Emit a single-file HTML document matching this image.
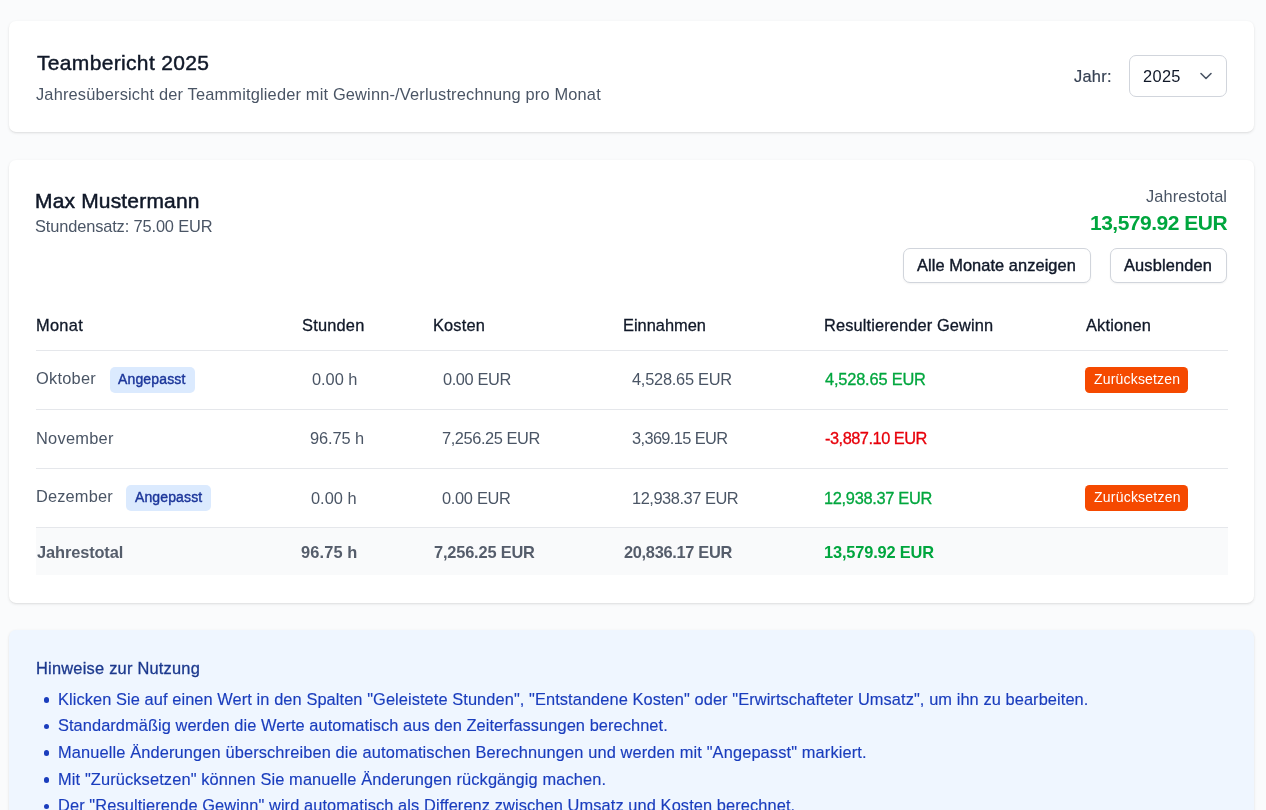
<!DOCTYPE html>
<html lang="de">
<head>
<meta charset="utf-8">
<title>Teambericht 2025</title>
<style>
*{box-sizing:border-box;margin:0;padding:0}
html,body{width:1266px;height:810px;overflow:hidden}
body{background:#fafbfc;font-family:"Liberation Sans",sans-serif;color:#101828;position:relative}
.card{position:absolute;left:9px;width:1245px;background:#fff;border-radius:7px;box-shadow:0 1px 3px rgba(0,0,0,.10),0 1px 2px -1px rgba(0,0,0,.10)}
.box{position:absolute}
.tx{position:absolute;white-space:nowrap;line-height:1;will-change:transform}

.sel{border:1px solid #d1d5dc;border-radius:7px;background:#fff}
.btn{border:1px solid #d1d5dc;border-radius:7px;background:#fff;box-shadow:0 1px 2px rgba(0,0,0,.05)}
.line{height:1px;background:#e5e7eb;left:36px;width:1192px}
.badge{background:#dbeafe;border-radius:5px}
.reset{background:#f54900;border-radius:4.5px}
.dot{width:5.5px;height:5.5px;border-radius:50%;background:#1a3dbd;left:43.8px}

</style>
</head>
<body>
<div class="card" style="top:21px;height:111px"></div>
<div class="card" style="top:160px;height:443px"></div>
<div class="card" style="top:630px;height:230px;background:#eff6ff"></div>
<div class="box sel" style="left:1129px;top:55px;width:98px;height:42px"></div>
<svg class="box" style="left:1199px;top:71px" width="14" height="10" viewBox="0 0 14 10"><path d="M2 2.5 L7 7.5 L12 2.5" fill="none" stroke="#4a5565" stroke-width="1.6" stroke-linecap="round" stroke-linejoin="round"/></svg>
<div class="box btn" style="left:903px;top:248px;width:188px;height:35px"></div>
<div class="box btn" style="left:1110px;top:248px;width:117px;height:35px"></div>
<div class="box line" style="top:350px"></div>
<div class="box line" style="top:409px"></div>
<div class="box line" style="top:468px"></div>
<div class="box line" style="top:527px"></div>
<div class="box" style="left:36px;top:528px;width:1192px;height:47px;background:#f9fafb"></div>
<div class="box badge" style="left:109.5px;top:367px;width:85.5px;height:26px"></div>
<div class="box badge" style="left:125.5px;top:485px;width:85.5px;height:26px"></div>
<div class="box reset" style="left:1085px;top:366.5px;width:103px;height:26.5px"></div>
<div class="box reset" style="left:1085px;top:484.5px;width:103px;height:26.5px"></div>
<div class="box dot" style="top:697.0px"></div>
<div class="box dot" style="top:723.8px"></div>
<div class="box dot" style="top:750.3px"></div>
<div class="box dot" style="top:777.1px"></div>
<div class="box dot" style="top:803.7px"></div>

<span id="t1" class="tx" style="top:52.00px;font-size:21px;color:#101828;left:36.50px;-webkit-text-stroke:0.45px #101828;letter-spacing:0.333px;">Teambericht 2025</span>
<span id="sub1" class="tx" style="top:85.51px;font-size:16.4px;color:#4a5565;left:36.00px;letter-spacing:0.169px;">Jahresübersicht der Teammitglieder mit Gewinn-/Verlustrechnung pro Monat</span>
<span id="jahr" class="tx" style="top:67.70px;font-size:16.4px;color:#364153;left:1073.50px;-webkit-text-stroke:0.2px #364153;letter-spacing:0.250px;">Jahr:</span>
<span id="y2025" class="tx" style="top:67.70px;font-size:16.4px;color:#101828;left:1143.00px;letter-spacing:0.333px;">2025</span>
<span id="name" class="tx" style="top:189.61px;font-size:21px;color:#101828;left:35.40px;-webkit-text-stroke:0.5px #101828;letter-spacing:0.169px;">Max Mustermann</span>
<span id="rate" class="tx" style="top:218.11px;font-size:16.4px;color:#4a5565;left:35.40px;letter-spacing:-0.133px;">Stundensatz: 75.00 EUR</span>
<span id="jt" class="tx" style="top:188.11px;font-size:16.4px;color:#4a5565;right:39.00px;letter-spacing:0.080px;">Jahrestotal</span>
<span id="big" class="tx" style="top:211.90px;font-size:21px;color:#00a63e;right:39.00px;font-weight:700;letter-spacing:-0.500px;">13,579.92 EUR</span>
<span id="b1" class="tx" style="top:256.90px;font-size:16.4px;color:#101828;left:917.40px;-webkit-text-stroke:0.4px #101828;letter-spacing:0.063px;">Alle Monate anzeigen</span>
<span id="b2" class="tx" style="top:256.90px;font-size:16.4px;color:#101828;left:1124.30px;-webkit-text-stroke:0.4px #101828;letter-spacing:0.156px;">Ausblenden</span>
<span id="h1" class="tx" style="top:316.82px;font-size:16.4px;color:#101828;left:35.60px;-webkit-text-stroke:0.3px #101828;letter-spacing:0.300px;">Monat</span>
<span id="h2" class="tx" style="top:316.82px;font-size:16.4px;color:#101828;left:302.10px;-webkit-text-stroke:0.3px #101828;letter-spacing:0.200px;">Stunden</span>
<span id="h3" class="tx" style="top:316.82px;font-size:16.4px;color:#101828;left:433.20px;-webkit-text-stroke:0.3px #101828;letter-spacing:0.160px;">Kosten</span>
<span id="h4" class="tx" style="top:316.82px;font-size:16.4px;color:#101828;left:623.20px;-webkit-text-stroke:0.3px #101828;">Einnahmen</span>
<span id="h5" class="tx" style="top:316.82px;font-size:16.4px;color:#101828;left:824.00px;-webkit-text-stroke:0.3px #101828;letter-spacing:0.120px;">Resultierender Gewinn</span>
<span id="h6" class="tx" style="top:316.82px;font-size:16.4px;color:#101828;left:1085.50px;-webkit-text-stroke:0.3px #101828;letter-spacing:0.171px;">Aktionen</span>
<span id="r1m" class="tx" style="top:370.01px;font-size:16.4px;color:#4a5565;left:35.60px;letter-spacing:0.233px;">Oktober</span>
<span id="r1a" class="tx" style="top:372.01px;font-size:14px;color:#1c369a;left:118.40px;-webkit-text-stroke:0.4px #1c369a;letter-spacing:0.150px;">Angepasst</span>
<span id="r1s" class="tx" style="top:371.40px;font-size:16.4px;color:#4a5565;left:311.70px;letter-spacing:-0.040px;">0.00 h</span>
<span id="r1k" class="tx" style="top:371.40px;font-size:16.4px;color:#4a5565;left:443.10px;letter-spacing:-0.400px;">0.00 EUR</span>
<span id="r1e" class="tx" style="top:371.40px;font-size:16.4px;color:#4a5565;left:632.30px;letter-spacing:-0.255px;">4,528.65 EUR</span>
<span id="r1g" class="tx" style="top:371.40px;font-size:16.4px;color:#00a63e;left:825.00px;-webkit-text-stroke:0.3px #00a63e;letter-spacing:-0.182px;">4,528.65 EUR</span>
<span id="r1z" class="tx" style="top:372.01px;font-size:14px;color:#ffffff;left:1094.00px;letter-spacing:0.182px;">Zurücksetzen</span>
<span id="r2m" class="tx" style="top:430.32px;font-size:16.4px;color:#4a5565;left:35.60px;letter-spacing:0.257px;">November</span>
<span id="r2s" class="tx" style="top:430.32px;font-size:16.4px;color:#4a5565;left:309.80px;letter-spacing:-0.100px;">96.75 h</span>
<span id="r2k" class="tx" style="top:430.32px;font-size:16.4px;color:#4a5565;left:441.60px;letter-spacing:-0.418px;">7,256.25 EUR</span>
<span id="r2e" class="tx" style="top:430.32px;font-size:16.4px;color:#4a5565;left:632.00px;letter-spacing:-0.636px;">3,369.15 EUR</span>
<span id="r2g" class="tx" style="top:430.32px;font-size:16.4px;color:#e7000b;left:824.50px;-webkit-text-stroke:0.3px #e7000b;letter-spacing:-0.500px;">-3,887.10 EUR</span>
<span id="r3m" class="tx" style="top:488.40px;font-size:16.4px;color:#4a5565;left:35.60px;letter-spacing:0.143px;">Dezember</span>
<span id="r3a" class="tx" style="top:490.41px;font-size:14px;color:#1c369a;left:135.00px;-webkit-text-stroke:0.4px #1c369a;letter-spacing:0.125px;">Angepasst</span>
<span id="r3s" class="tx" style="top:489.51px;font-size:16.4px;color:#4a5565;left:311.00px;">0.00 h</span>
<span id="r3k" class="tx" style="top:489.51px;font-size:16.4px;color:#4a5565;left:442.00px;letter-spacing:-0.314px;">0.00 EUR</span>
<span id="r3e" class="tx" style="top:489.51px;font-size:16.4px;color:#4a5565;left:632.00px;letter-spacing:-0.450px;">12,938.37 EUR</span>
<span id="r3g" class="tx" style="top:489.51px;font-size:16.4px;color:#00a63e;left:823.50px;-webkit-text-stroke:0.3px #00a63e;letter-spacing:-0.317px;">12,938.37 EUR</span>
<span id="r3z" class="tx" style="top:489.91px;font-size:14px;color:#ffffff;left:1094.20px;letter-spacing:0.218px;">Zurücksetzen</span>
<span id="t1m" class="tx" style="top:543.61px;font-size:16.4px;color:#555d6b;left:36.60px;font-weight:700;letter-spacing:-0.120px;">Jahrestotal</span>
<span id="t1s" class="tx" style="top:543.61px;font-size:16.4px;color:#555d6b;left:301.40px;font-weight:700;letter-spacing:0.133px;">96.75 h</span>
<span id="t1k" class="tx" style="top:543.61px;font-size:16.4px;color:#555d6b;left:434.00px;font-weight:700;letter-spacing:-0.182px;">7,256.25 EUR</span>
<span id="t1e" class="tx" style="top:543.61px;font-size:16.4px;color:#555d6b;left:623.60px;font-weight:700;letter-spacing:-0.317px;">20,836.17 EUR</span>
<span id="t1g" class="tx" style="top:543.61px;font-size:16.4px;color:#00a63e;left:823.50px;font-weight:700;letter-spacing:-0.167px;">13,579.92 EUR</span>
<span id="hint" class="tx" style="top:659.70px;font-size:16.4px;color:#1c398e;left:36.00px;-webkit-text-stroke:0.3px #1c398e;letter-spacing:0.232px;">Hinweise zur Nutzung</span>
<span id="li1" class="tx" style="top:690.51px;font-size:16.4px;color:#1a3dbd;left:57.80px;-webkit-text-stroke:0.15px #1a3dbd;letter-spacing:0.079px;">Klicken Sie auf einen Wert in den Spalten &quot;Geleistete Stunden&quot;, &quot;Entstandene Kosten&quot; oder &quot;Erwirtschafteter Umsatz&quot;, um ihn zu bearbeiten.</span>
<span id="li2" class="tx" style="top:717.32px;font-size:16.4px;color:#1a3dbd;left:57.80px;-webkit-text-stroke:0.15px #1a3dbd;letter-spacing:0.066px;">Standardmäßig werden die Werte automatisch aus den Zeiterfassungen berechnet.</span>
<span id="li3" class="tx" style="top:743.82px;font-size:16.4px;color:#1a3dbd;left:57.80px;-webkit-text-stroke:0.15px #1a3dbd;letter-spacing:0.124px;">Manuelle Änderungen überschreiben die automatischen Berechnungen und werden mit &quot;Angepasst&quot; markiert.</span>
<span id="li4" class="tx" style="top:770.61px;font-size:16.4px;color:#1a3dbd;left:57.80px;-webkit-text-stroke:0.15px #1a3dbd;letter-spacing:0.119px;">Mit &quot;Zurücksetzen&quot; können Sie manuelle Änderungen rückgängig machen.</span>
<span id="li5" class="tx" style="top:797.20px;font-size:16.4px;color:#1a3dbd;left:57.80px;-webkit-text-stroke:0.15px #1a3dbd;letter-spacing:0.094px;">Der &quot;Resultierende Gewinn&quot; wird automatisch als Differenz zwischen Umsatz und Kosten berechnet.</span>
</body>
</html>
